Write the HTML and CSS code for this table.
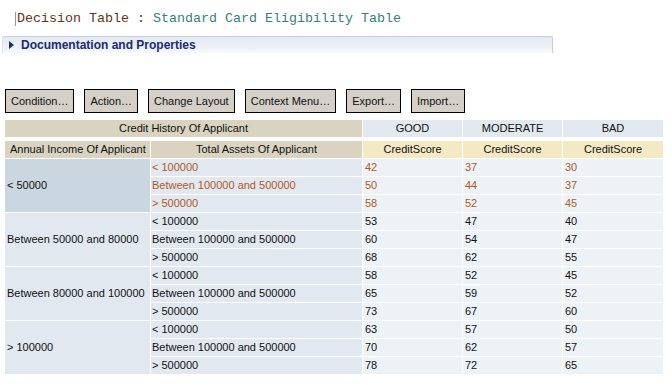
FILE: index.html
```html
<!DOCTYPE html>
<html>
<head>
<meta charset="utf-8">
<link rel="stylesheet" href="styles.css">
</head>
<body>
<div class="title"><span class="kw">Decision Table :</span> <span class="name">Standard Card Eligibility Table</span></div>
<div class="docbar">
  <svg class="tri" width="5" height="8" viewBox="0 0 5 8"><path d="M0 0 L5 4 L0 8 Z" fill="#1c2c6c"/></svg>
  <span>Documentation and Properties</span>
</div>
<div class="toolbar">
  <button class="btn">Condition…</button>
  <button class="btn">Action…</button>
  <button class="btn">Change Layout</button>
  <button class="btn">Context Menu…</button>
  <button class="btn">Export…</button>
  <button class="btn">Import…</button>
</div>
<div class="grid head1">
  <div class="c tan span2">Credit History Of Applicant</div>
  <div class="c blue">GOOD</div>
  <div class="c blue">MODERATE</div>
  <div class="c blue">BAD</div>
</div>
<div class="grid body">
  <div class="c tan left">Annual Income Of Applicant</div>
  <div class="c tan">Total Assets Of Applicant</div>
  <div class="c yel">CreditScore</div>
  <div class="c yel">CreditScore</div>
  <div class="c yel">CreditScore</div>

  <div class="c g1 sel">&lt; 50000</div>
  <div class="c g2 hl">&lt; 100000</div><div class="c d hl">42</div><div class="c d hl">37</div><div class="c d hl">30</div>
  <div class="c g2 hl">Between 100000 and 500000</div><div class="c d hl">50</div><div class="c d hl">44</div><div class="c d hl">37</div>
  <div class="c g2 hl">&gt; 500000</div><div class="c d hl">58</div><div class="c d hl">52</div><div class="c d hl">45</div>

  <div class="c g1">Between 50000 and 80000</div>
  <div class="c g2">&lt; 100000</div><div class="c d">53</div><div class="c d">47</div><div class="c d">40</div>
  <div class="c g2">Between 100000 and 500000</div><div class="c d">60</div><div class="c d">54</div><div class="c d">47</div>
  <div class="c g2">&gt; 500000</div><div class="c d">68</div><div class="c d">62</div><div class="c d">55</div>

  <div class="c g1">Between 80000 and 100000</div>
  <div class="c g2">&lt; 100000</div><div class="c d">58</div><div class="c d">52</div><div class="c d">45</div>
  <div class="c g2">Between 100000 and 500000</div><div class="c d">65</div><div class="c d">59</div><div class="c d">52</div>
  <div class="c g2">&gt; 500000</div><div class="c d">73</div><div class="c d">67</div><div class="c d">60</div>

  <div class="c g1">&gt; 100000</div>
  <div class="c g2">&lt; 100000</div><div class="c d">63</div><div class="c d">57</div><div class="c d">50</div>
  <div class="c g2">Between 100000 and 500000</div><div class="c d">70</div><div class="c d">62</div><div class="c d">57</div>
  <div class="c g2">&gt; 500000</div><div class="c d">78</div><div class="c d">72</div><div class="c d">65</div>
</div>
</body>
</html>
```
FILE: styles.css
```css
html, body {
  margin: 0;
  padding: 0;
  background: #ffffff;
}
body {
  font-family: "Liberation Sans", Arial, sans-serif;
  font-size: 11px;
  color: #111111;
}
.title {
  margin: 12px 0 0 15px;
  padding-left: 1px;
  border-left: 1px solid #a09890;
  height: 14px;
  line-height: 13px;
  font-family: "Liberation Mono", "Courier New", monospace;
  font-size: 13.33px;
  white-space: pre;
}
.title .kw { color: #5e3418; }
.title .name { color: #35807c; }
.docbar {
  margin: 10px 0 0 2px;
  width: 551px;
  height: 17px;
  box-sizing: border-box;
  border-top: 1px solid #c6cedb;
  border-right: 1px solid #c6cedb;
  border-left: 1px solid #dde3ec;
  border-top-left-radius: 2px;
  border-top-right-radius: 2px;
  background: linear-gradient(#e4eaf2, #eef2f7 70%, #f8fafc);
  display: flex;
  align-items: center;
  gap: 7px;
  padding-left: 6px;
  font-weight: bold;
  font-size: 12px;
  color: #1c2c6c;
}
.tri { display: block; }
.toolbar {
  display: flex;
  gap: 10px;
  margin: 36px 0 0 5px;
}
.btn {
  height: 24px;
  padding: 0 5px;
  margin: 0;
  border: 1px solid #000000;
  background: #d4d0c8;
  font-family: "Liberation Sans", Arial, sans-serif;
  font-size: 11px;
  color: #111111;
  border-radius: 0;
}
.grid {
  display: grid;
  grid-template-columns: 145px 211px 99px 99px 100px;
  column-gap: 1px;
  row-gap: 1px;
  margin-left: 5px;
  width: 658px;
}
.head1 { margin-top: 7px; grid-auto-rows: 17px; }
.body { margin-top: 4px; grid-auto-rows: 17px; }
.c {
  line-height: 17px;
  white-space: nowrap;
  overflow: hidden;
  text-align: center;
}
.span2 { grid-column: span 2; }
.tan { background: #d9d3bf; }
.blue { background: #e1e8f0; }
.yel { background: #f3e9c3; }
.left { text-align: left; padding-left: 5px; }
.g1 {
  grid-row: span 3;
  background: #e1e8f0;
  text-align: left;
  padding-left: 2px;
  display: flex;
  align-items: center;
}
.g1.sel { background: #cad7e0; }
.g2 {
  background: #e1e8f0;
  text-align: left;
  padding-left: 1px;
}
.d {
  background: #edf2f6;
  text-align: left;
  padding-left: 2px;
}
.hl { color: #b05a22; }
```
